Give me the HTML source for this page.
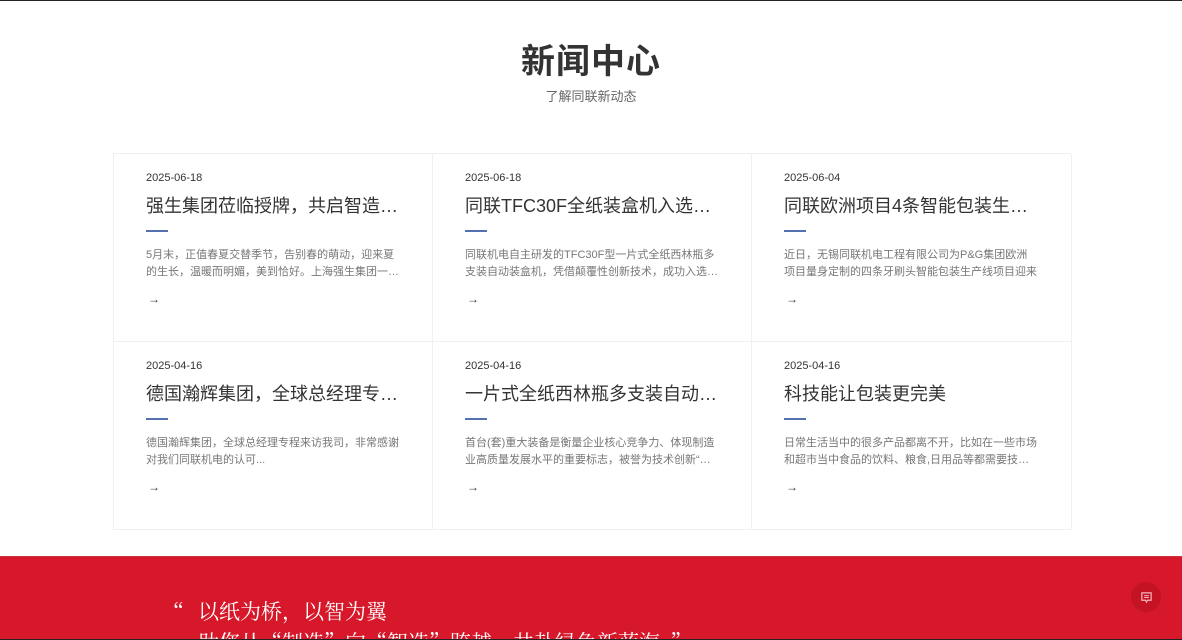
<!DOCTYPE html>
<html><head><meta charset="utf-8"><style>
*{margin:0;padding:0;box-sizing:border-box}
html,body{width:1182px;height:640px;overflow:hidden}
body{background:#fff;font-family:"Liberation Sans","Noto Sans CJK SC",sans-serif;border-top:1px solid #222;position:relative}
h1{position:absolute;top:33px;left:0;width:100%;text-align:center;font-size:34px;font-weight:700;color:#333;letter-spacing:1px}
.sub{position:absolute;top:85px;left:0;width:100%;text-align:center;font-size:13px;color:#666}
.grid{position:absolute;left:113px;top:152px;width:958px;display:grid;grid-template-columns:319px 319px 320px;border-top:1px solid #f0f0f0;border-left:1px solid #f0f0f0}
.c{height:188px;border-right:1px solid #f0f0f0;border-bottom:1px solid #f0f0f0;padding:18px 32px 0 32px;position:relative}
.d{font-size:11px;color:#333}
.t{margin-top:9px;font-size:18px;color:#333;white-space:nowrap;overflow:hidden;text-overflow:ellipsis;line-height:26px;width:254px}
.l{width:22px;height:2px;background:#5570b0;margin-top:11px}
.p{margin-top:15px;font-size:11px;line-height:17px;color:#777;width:254px;display:-webkit-box;-webkit-line-clamp:2;-webkit-box-orient:vertical;overflow:hidden}
.a{position:absolute;left:34px;top:138px;font-size:12px;color:#333}
.red{position:absolute;left:0;top:555px;width:1182px;height:83px;background:#d7182a;border-top:1px solid #c8343f}
.q0{position:absolute;left:162px;top:40px;color:#fff;font-family:"Noto Serif CJK SC",serif;font-size:22px}
.q{position:absolute;left:198px;top:40px;color:#fff;font-family:"Noto Serif CJK SC",serif;font-size:21px;line-height:28px;white-space:nowrap}
.q2{position:absolute;left:198px;top:70px;color:#fff;font-family:"Noto Serif CJK SC",serif;font-size:21px;white-space:nowrap}
.bot{position:absolute;left:0;top:638px;width:1182px;height:2px;background:#222}
.chat{position:absolute;left:1131px;top:25px;width:30px;height:30px;border-radius:50%;background:#c41424;display:flex;align-items:center;justify-content:center}
</style></head><body>
<h1>新闻中心</h1>
<div class="sub">了解同联新动态</div>
<div class="grid">
<div class="c"><div class="d">2025-06-18</div><div class="t">强生集团莅临授牌，共启智造新篇章</div><div class="l"></div><div class="p">5月末，正值春夏交替季节，告别春的萌动，迎来夏的生长，温暖而明媚，美到恰好。上海强生集团一行莅临</div><div class="a">→</div></div>
<div class="c"><div class="d">2025-06-18</div><div class="t">同联TFC30F全纸装盒机入选江苏省</div><div class="l"></div><div class="p">同联机电自主研发的TFC30F型一片式全纸西林瓶多支装自动装盒机，凭借颠覆性创新技术，成功入选江苏</div><div class="a">→</div></div>
<div class="c"><div class="d">2025-06-04</div><div class="t">同联欧洲项目4条智能包装生产线</div><div class="l"></div><div class="p">近日，无锡同联机电工程有限公司为P&amp;G集团欧洲项目量身定制的四条牙刷头智能包装生产线项目迎来</div><div class="a">→</div></div>
<div class="c"><div class="d">2025-04-16</div><div class="t">德国瀚辉集团，全球总经理专程来访</div><div class="l"></div><div class="p">德国瀚辉集团，全球总经理专程来访我司，非常感谢对我们同联机电的认可...</div><div class="a">→</div></div>
<div class="c"><div class="d">2025-04-16</div><div class="t">一片式全纸西林瓶多支装自动装盒机</div><div class="l"></div><div class="p">首台(套)重大装备是衡量企业核心竞争力、体现制造业高质量发展水平的重要标志，被誉为技术创新“皇冠</div><div class="a">→</div></div>
<div class="c"><div class="d">2025-04-16</div><div class="t">科技能让包装更完美</div><div class="l"></div><div class="p">日常生活当中的很多产品都离不开，比如在一些市场和超市当中食品的饮料、粮食,日用品等都需要技术支持</div><div class="a">→</div></div>
</div>
<div class="red">
<div class="q0">“</div>
<div class="q">以纸为桥，以智为翼</div>
<div class="q2">助您从“制造”向“智造”跨越，共赴绿色新蓝海。”</div>
<div class="chat"><svg width="13" height="13" viewBox="0 0 14 14"><path d="M2 2h10v8H8l-1 2-1-2H2z" fill="none" stroke="#f5b5bb" stroke-width="1.3"/><path d="M4.5 5h5M4.5 7h5" stroke="#f5b5bb" stroke-width="1"/></svg></div>
</div>
<div class="bot"></div>
</body></html>
